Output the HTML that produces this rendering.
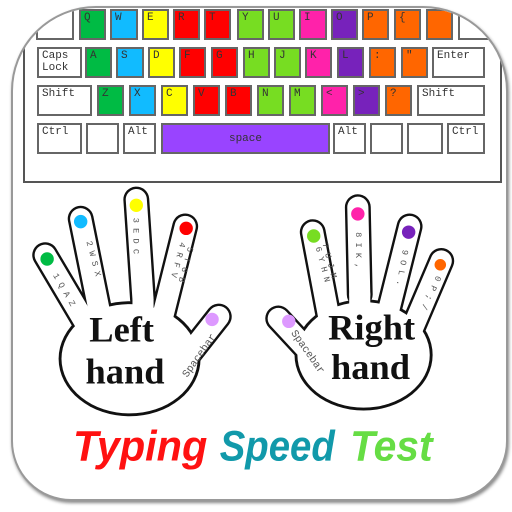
<!DOCTYPE html><html><head><style>
body{margin:0;width:512px;height:512px;background:#fff;overflow:hidden;position:relative;font-family:"Liberation Mono",monospace}
.card{position:absolute;left:11px;top:6px;width:493px;height:491px;border:2px solid #999;border-radius:85px 85px 60px 60px;overflow:hidden;background:#fff;box-shadow:1px 2px 3px #888}
.k{position:absolute;border:2px solid #666;box-sizing:border-box;height:31px;font-size:11px;color:#333;padding:1px 3px;line-height:12px}
.frame{position:absolute;left:10px;top:-10px;width:479px;height:185px;border:2px solid #555;box-sizing:border-box}
</style></head><body>
<div class="card">
<div class="frame"></div>
<div id="kb"></div>
<svg width="493" height="491" style="position:absolute;left:-11px;top:-6px" viewBox="0 0 512 512">
<g stroke-linecap="round" fill="none">
<g stroke="#111" stroke-width="27">
<line x1="44" y1="264" x2="92" y2="345"/><line x1="81" y1="226" x2="102" y2="330"/><line x1="139" y1="206" x2="146" y2="310"/><line x1="190" y1="234" x2="166" y2="330"/><line x1="225" y1="328" x2="180" y2="385"/>
</g>
<ellipse cx="132" cy="372" rx="74" ry="60" fill="#111"/>
<g stroke="#fff" stroke-width="22">
<line x1="44" y1="264" x2="92" y2="345"/><line x1="81" y1="226" x2="102" y2="330"/><line x1="139" y1="206" x2="146" y2="310"/><line x1="190" y1="234" x2="166" y2="330"/><line x1="225" y1="328" x2="180" y2="385"/>
</g>
<ellipse cx="132" cy="372" rx="71" ry="57" fill="#fff"/>
<g stroke="#fff" stroke-width="22">
<line x1="92" y1="345" x2="110" y2="370"/><line x1="102" y1="330" x2="110" y2="360"/><line x1="146" y1="310" x2="146" y2="340"/><line x1="166" y1="330" x2="160" y2="350"/><line x1="180" y1="385" x2="170" y2="395"/>
</g></g>
<g stroke-linecap="round" fill="none">
<g stroke="#111" stroke-width="27">
<line x1="287" y1="330" x2="338" y2="385"/><line x1="323" y1="240" x2="340" y2="330"/><line x1="370" y1="214" x2="372" y2="305"/><line x1="424" y1="234" x2="400" y2="330"/><line x1="457" y1="270" x2="425" y2="345"/>
</g>
<ellipse cx="376" cy="368" rx="72" ry="58" fill="#111"/>
<g stroke="#fff" stroke-width="22">
<line x1="287" y1="330" x2="338" y2="385"/><line x1="323" y1="240" x2="340" y2="330"/><line x1="370" y1="214" x2="372" y2="305"/><line x1="424" y1="234" x2="400" y2="330"/><line x1="457" y1="270" x2="425" y2="345"/>
</g>
<ellipse cx="376" cy="368" rx="69" ry="55" fill="#fff"/>
<g stroke="#fff" stroke-width="22">
<line x1="338" y1="385" x2="350" y2="392"/><line x1="340" y1="330" x2="345" y2="355"/><line x1="372" y1="305" x2="372" y2="330"/><line x1="400" y1="330" x2="395" y2="350"/><line x1="425" y1="345" x2="415" y2="365"/>
</g></g>
<g fill="#555" font-size="9" font-family="Liberation Mono,monospace">
<text transform="translate(52,285) rotate(60)">1 Q A Z</text>
<text transform="translate(87,250) rotate(75)">2 W S X</text>
<text transform="translate(136,225) rotate(90)">3 E D C</text>
<text transform="translate(185,250) rotate(105)">4 R F V</text>
<text transform="translate(193,255) rotate(105)">5 T G B</text>
<text transform="translate(192,392) rotate(-55)" font-size="11">Spacebar</text>
<text transform="translate(300,345) rotate(55)" font-size="11">Spacebar</text>
<text transform="translate(326,256) rotate(75)">6 Y H N</text>
<text transform="translate(333,252) rotate(75)">7 U J M</text>
<text transform="translate(368,240) rotate(90)">8 I K ,</text>
<text transform="translate(417,258) rotate(100)">9 O L .</text>
<text transform="translate(452,285) rotate(115)">0 P ; /</text>
</g>
<g>
<circle cx="46" cy="268" r="7" fill="#0b4"/><circle cx="81" cy="229" r="7" fill="#1bf"/><circle cx="139" cy="212" r="7" fill="#ff0"/><circle cx="191" cy="236" r="7" fill="#f00"/><circle cx="218" cy="331" r="7" fill="#d9f"/>
<circle cx="298" cy="333" r="7" fill="#d9f"/><circle cx="324" cy="244" r="7" fill="#7d2"/><circle cx="370" cy="221" r="7" fill="#f2a"/><circle cx="423" cy="240" r="7" fill="#72b"/><circle cx="456" cy="274" r="6" fill="#f60"/>
</g>
<g font-family="Liberation Serif,serif" font-weight="bold" font-size="38" fill="#111">
<text x="90" y="354">Left</text><text x="86" y="398">hand</text>
<text x="339" y="352">Right</text><text x="342" y="393">hand</text>
</g>
<g font-family="Liberation Sans,sans-serif" font-weight="bold" font-style="italic" font-size="44">
<text x="73" y="478" fill="#f11" textLength="140" lengthAdjust="spacingAndGlyphs">Typing</text><text x="226" y="478" fill="#19a" textLength="120" lengthAdjust="spacingAndGlyphs">Speed</text><text x="362" y="478" fill="#6d4" textLength="86" lengthAdjust="spacingAndGlyphs">Test</text>
</g>
</svg>
</div>
<script>
var rows=[
[7,[[34,72,'#fff',''],[77,104,'#0b4','Q'],[108,136,'#1bf','W'],[140,167,'#ff0','E'],[171,198,'#f00','R'],[202,229,'#f00','T'],[235,262,'#7d2','Y'],[266,293,'#7d2','U'],[297,325,'#f2a','I'],[329,356,'#72b','O'],[360,387,'#f60','P'],[392,419,'#f60','{'],[424,451,'#f60',''],[456,495,'#fff','\\']]],
[45,[[35,80,'#fff','Caps Lock'],[83,110,'#0b4','A'],[114,142,'#1bf','S'],[146,173,'#ff0','D'],[177,204,'#f00','F'],[209,236,'#f00','G'],[241,268,'#7d2','H'],[272,299,'#7d2','J'],[303,330,'#f2a','K'],[335,362,'#72b','L'],[367,394,'#f60',':'],[399,426,'#f60','"'],[430,483,'#fff','Enter']]],
[83,[[35,90,'#fff','Shift'],[95,122,'#0b4','Z'],[127,154,'#1bf','X'],[159,186,'#ff0','C'],[191,218,'#f00','V'],[223,250,'#f00','B'],[255,282,'#7d2','N'],[287,314,'#7d2','M'],[319,346,'#f2a','<'],[351,378,'#72b','>'],[383,410,'#f60','?'],[415,483,'#fff','Shift']]],
[121,[[35,80,'#fff','Ctrl'],[84,117,'#fff',''],[121,154,'#fff','Alt'],[159,328,'#94f','space'],[331,364,'#fff','Alt'],[368,401,'#fff',''],[405,441,'#fff',''],[445,483,'#fff','Ctrl']]]];
var h='';rows.forEach(function(r){r[1].forEach(function(k){var s=k[3]=='space'?'text-align:center;line-height:26px;':'';
h+='<div class="k" style="'+s+'left:'+(k[0]-11)+'px;top:'+(r[0]-6)+'px;width:'+(k[1]-k[0])+'px;background:'+k[2]+'">'+k[3]+'</div>';});});
document.getElementById('kb').innerHTML=h;
</script>
</body></html>
